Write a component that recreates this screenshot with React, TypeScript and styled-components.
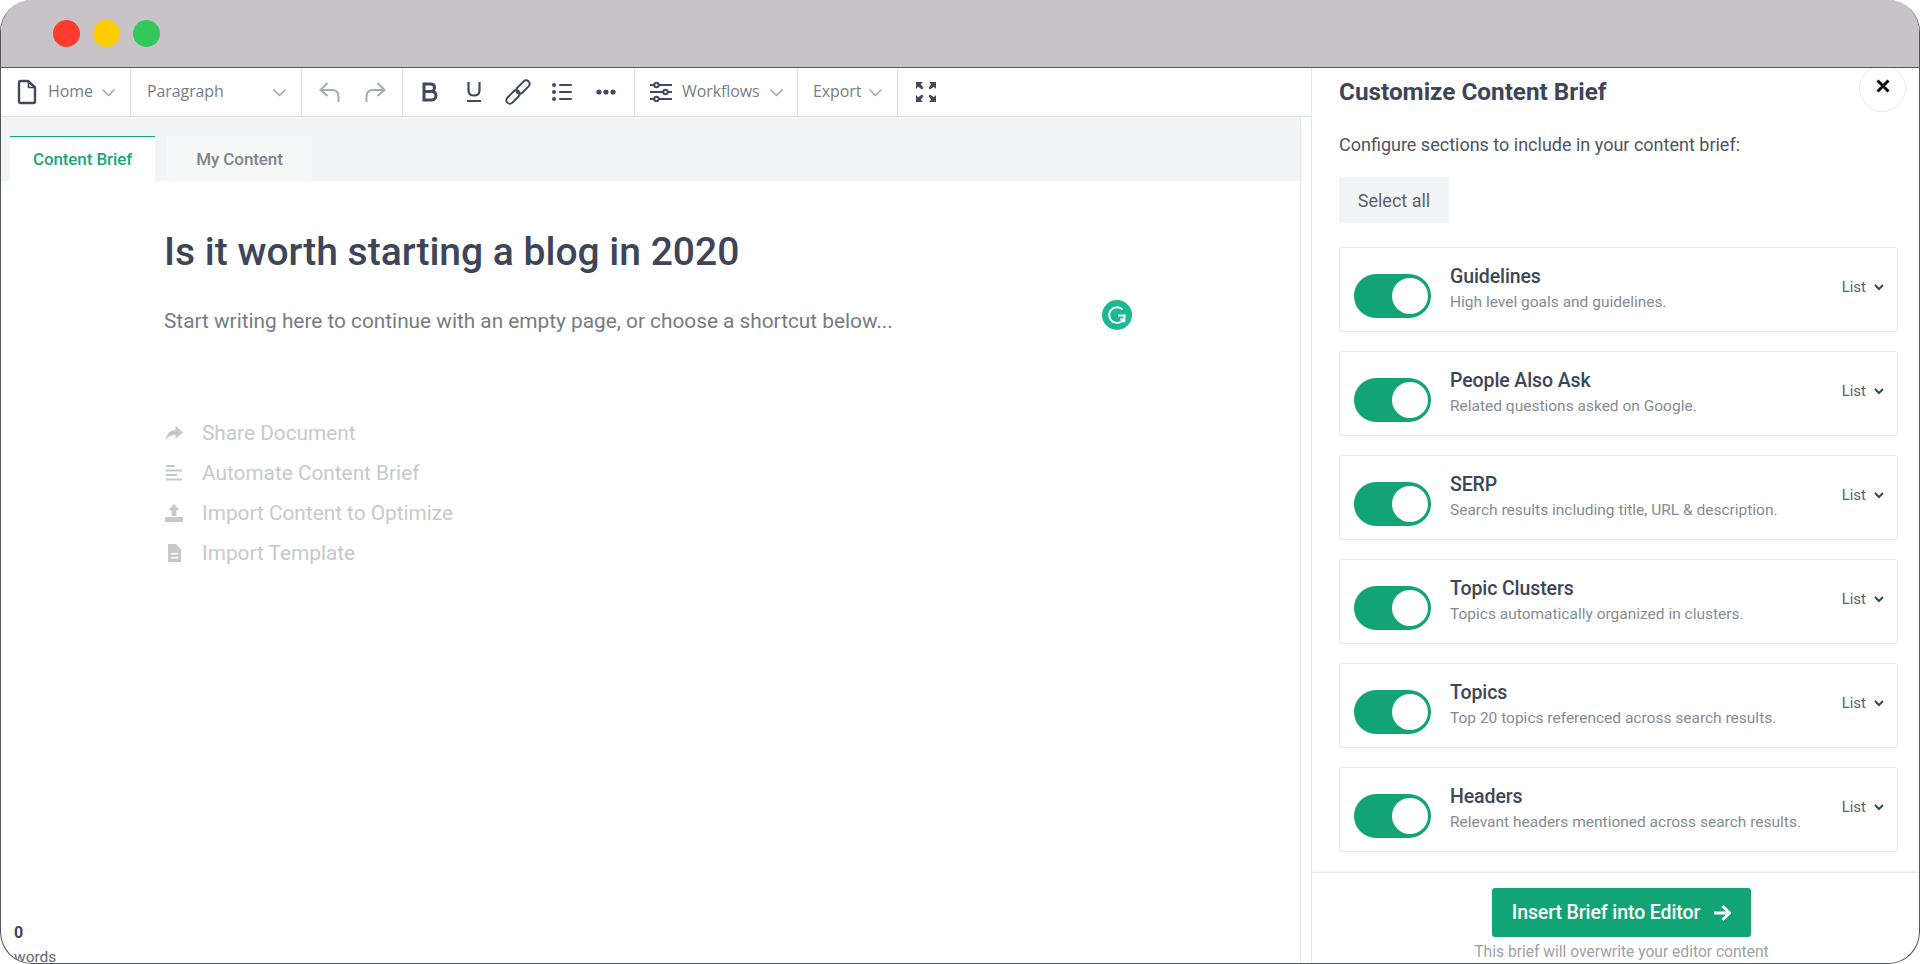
import React from "react";
import styled, { createGlobalStyle } from "styled-components";

const GlobalStyle = createGlobalStyle`
  html, body {
    margin: 0;
    padding: 0;
    background: #ffffff;
  }
  body {
    font-family: Roboto, "Liberation Sans", sans-serif;
  }
  * {
    box-sizing: border-box;
  }
`;

const Window = styled.div`
  display: flex;
  flex-direction: column;
  width: 1920px;
  height: 964px;
  overflow: hidden;
  border-radius: 32px;
  border: 1px solid #55565a;
  border-top: none;
  background: #ffffff;
`;

const TitleBar = styled.div`
  display: flex;
  flex: none;
  align-items: center;
  gap: 13px;
  height: 68px;
  padding: 0 0 0 52px;
  background: #c8c3c7;
  border-bottom: 1px solid #55565a;
`;

const Light = styled.span<{ $color: string }>`
  width: 27px;
  height: 27px;
  border-radius: 50%;
  background: ${(p) => p.$color};
`;

const Body = styled.div`
  display: flex;
  flex: 1;
  min-height: 0;
`;

const LeftColumn = styled.div`
  display: flex;
  flex-direction: column;
  width: 1311px;
  border-right: 1px solid #e5e7e9;
`;

const Toolbar = styled.div`
  display: flex;
  flex: none;
  height: 49px;
  border-bottom: 1px solid #dcdee0;
`;

const ToolGroup = styled.div<{ $width: number; $pad: number; $gap?: number; $last?: boolean }>`
  display: flex;
  flex: none;
  align-items: center;
  gap: ${(p) => p.$gap ?? 0}px;
  width: ${(p) => p.$width}px;
  padding-left: ${(p) => p.$pad}px;
  border-right: ${(p) => (p.$last ? "none" : "1px solid #dcdee0")};
  font-family: "Open Sans", sans-serif;
  font-size: 16px;
  color: #777d85;
`;

const ToolLabel = styled.span<{ $left?: number; $right?: number }>`
  margin-top: -2px;
  margin-left: ${(p) => p.$left ?? 0}px;
  margin-right: ${(p) => p.$right ?? 0}px;
  white-space: nowrap;
  letter-spacing: -0.1px;
`;

const IconSlot = styled.span`
  display: flex;
  flex: none;
  align-items: center;
  justify-content: center;
  width: 44px;
`;

const MirrorSlot = styled.span`
  display: flex;
  transform: scaleX(-1);
`;

const Editor = styled.div`
  display: flex;
  flex: 1;
  flex-direction: column;
  width: 1300px;
  min-height: 0;
  border-right: 1px solid #e5e7e9;
`;

const TabBar = styled.div`
  display: flex;
  flex: none;
  gap: 12px;
  height: 64px;
  padding: 19px 0 0 9px;
  background: #f2f5f6;
`;

const Tab = styled.div<{ $active?: boolean }>`
  display: flex;
  align-items: center;
  justify-content: center;
  width: 145px;
  background: ${(p) => (p.$active ? "#ffffff" : "#f7f8f8")};
  border-top: 1px solid ${(p) => (p.$active ? "#12a474" : "#f7f8f8")};
  font-size: 17px;
  font-weight: 500;
  letter-spacing: -0.1px;
  color: ${(p) => (p.$active ? "#1fa57a" : "#7f858c")};
`;

const EditorContent = styled.div`
  position: relative;
  display: flex;
  flex: 1;
  flex-direction: column;
  padding: 45px 0 0 163px;
`;

const Heading = styled.h1`
  margin: 0;
  font-size: 39px;
  line-height: 52px;
  font-weight: 500;
  color: #3c4658;
`;

const Placeholder = styled.p`
  margin: 28px 0 0;
  font-size: 20.8px;
  line-height: 30px;
  color: #767c84;
`;

const ShortcutList = styled.div`
  display: flex;
  flex-direction: column;
  margin-top: 77px;
`;

const Shortcut = styled.div`
  display: flex;
  align-items: center;
  gap: 18px;
  height: 40px;
  font-size: 20.8px;
  color: #c6c9cc;
  svg {
    flex: none;
    width: 20px;
    height: 20px;
  }
`;

const GrammarlyBadge = styled.div`
  position: absolute;
  top: 119px;
  left: 1101px;
  display: flex;
  align-items: center;
  justify-content: center;
  width: 30px;
  height: 30px;
  border-radius: 50%;
  background: #1bb893;
`;

const WordCount = styled.div`
  position: absolute;
  left: 13px;
  bottom: -6px;
  color: #5f6672;
  font-size: 15.5px;
  line-height: 24px;
  b {
    display: block;
    color: #3c4658;
    font-size: 16px;
    font-weight: 700;
  }
`;

const Panel = styled.div`
  position: relative;
  display: flex;
  flex: 1;
  flex-direction: column;
  min-width: 0;
  overflow: hidden;
`;

const PanelBody = styled.div`
  display: flex;
  flex: 1;
  flex-direction: column;
  padding: 8px 21px 0 27px;
  overflow: hidden;
`;

const PanelTitle = styled.h2`
  margin: 0;
  font-size: 24.3px;
  line-height: 32px;
  font-weight: 700;
  color: #3c4658;
`;

const PanelIntro = styled.p`
  margin: 25px 0 0;
  font-size: 18px;
  line-height: 24px;
  color: #4d5561;
`;

const SelectAll = styled.button`
  width: 110px;
  height: 46px;
  margin-top: 20px;
  border: none;
  border-radius: 2px;
  background: #f3f4f6;
  font-family: inherit;
  font-size: 18px;
  color: #5b626c;
`;

const CardList = styled.div`
  display: flex;
  flex-direction: column;
  gap: 19px;
  margin-top: 24px;
`;

const Card = styled.div`
  display: flex;
  flex: none;
  align-items: center;
  height: 85px;
  padding: 0 12px 0 14px;
  border: 1px solid #e6e8ea;
  border-radius: 3px;
`;

const Toggle = styled.div`
  display: flex;
  flex: none;
  align-items: center;
  justify-content: flex-end;
  width: 77px;
  height: 44px;
  margin-top: 12px;
  padding-right: 3px;
  border-radius: 22px;
  background: #12a474;
  span {
    width: 36px;
    height: 36px;
    border-radius: 50%;
    background: #ffffff;
  }
`;

const CardText = styled.div`
  display: flex;
  flex: 1;
  flex-direction: column;
  gap: 3px;
  margin: -2px 0 0 19px;
`;

const CardTitle = styled.div`
  font-size: 19.5px;
  line-height: 24px;
  font-weight: 500;
  letter-spacing: -0.1px;
  color: #3c4658;
`;

const CardDesc = styled.div`
  font-size: 15.5px;
  line-height: 20px;
  color: #868b92;
`;

const ListSelect = styled.div`
  display: flex;
  align-items: center;
  gap: 7px;
  margin-top: -5px;
  font-size: 15px;
  color: #5b626c;
`;

const CloseButton = styled.div`
  position: absolute;
  top: -3px;
  left: 547px;
  display: flex;
  align-items: center;
  justify-content: center;
  width: 47px;
  height: 47px;
  padding-bottom: 5px;
  border: 1px solid #e8e8e8;
  border-radius: 50%;
  background: #ffffff;
`;

const PanelFooter = styled.div`
  display: flex;
  flex: none;
  flex-direction: column;
  align-items: center;
  height: 91px;
  padding: 15px 0 0 12px;
  border-top: 1px solid #e8e9ea;
  box-shadow: 0 -2px 2px rgba(0, 0, 0, 0.04);
`;

const InsertButton = styled.button`
  display: flex;
  align-items: center;
  justify-content: center;
  gap: 13px;
  width: 259px;
  height: 49px;
  border: none;
  border-radius: 3px;
  background: #12a474;
  color: #ffffff;
  font-family: inherit;
  font-size: 19.5px;
  font-weight: 500;
  letter-spacing: -0.1px;
`;

const FooterNote = styled.div`
  margin-top: 5px;
  font-size: 15.6px;
  line-height: 20px;
  color: #9ea2a7;
`;

const Chevron = () => (
  <svg width="15" height="15" viewBox="0 0 15 15" fill="none">
    <path d="M1.5 4.5 7.5 10.5 13.5 4.5" stroke="#9a9ea5" strokeWidth="1.3" />
  </svg>
);

const DocIcon = () => (
  <svg width="20" height="26" viewBox="0 0 20 26" fill="none">
    <path
      d="M2 3.5C2 2.7 2.7 2 3.5 2H11L18 8.5V22.5C18 23.3 17.3 24 16.5 24H3.5C2.7 24 2 23.3 2 22.5Z"
      stroke="#3f4960"
      strokeWidth="2.4"
      strokeLinejoin="round"
    />
    <path d="M11.5 2V8.5H18" stroke="#3f4960" strokeWidth="1.6" />
  </svg>
);

const UndoIcon = () => (
  <svg width="24" height="24" viewBox="0 0 24 24" fill="none">
    <path
      d="M9.5 3 2.5 10 9.5 16M3 10H14C18.5 10 20.5 13 20.5 16.5V22"
      stroke="#a6a9ad"
      strokeWidth="2"
    />
  </svg>
);

const BoldIcon = () => (
  <svg width="16" height="20" viewBox="0 0 16 20" fill="none">
    <path
      d="M2 2H8.5C11 2 12.5 3.5 12.5 5.5S11 9.5 8.5 9.5H2ZM2 9.5H9.5C12.3 9.5 14 11.2 14 13.6S12.3 18 9.5 18H2Z"
      stroke="#3f4960"
      strokeWidth="3"
    />
  </svg>
);

const UnderlineIcon = () => (
  <svg width="16" height="22" viewBox="0 0 16 22" fill="none">
    <path
      d="M2.5 1V9.5C2.5 12.5 4.5 14.5 8 14.5S13.5 12.5 13.5 9.5V1M1 20H15"
      stroke="#3f4960"
      strokeWidth="2.2"
    />
  </svg>
);

const LinkIcon = () => (
  <svg width="26" height="26" viewBox="0 0 26 26" fill="none" stroke="#3f4960" strokeWidth="2">
    <g transform="rotate(-45 13 13)">
      <rect x="-2" y="9.500" width="16" height="7" rx="3.500" />
      <rect x="12" y="9.500" width="16" height="7" rx="3.500" />
    </g>
  </svg>
);

const BulletIcon = () => (
  <svg width="20" height="20" viewBox="0 0 20 20" fill="#3f4960">
    <circle cx="2" cy="3" r="2" />
    <circle cx="2" cy="10" r="2" />
    <circle cx="2" cy="17" r="2" />
    <rect x="7" y="2" width="13" height="2" rx="1" />
    <rect x="7" y="9" width="13" height="2" rx="1" />
    <rect x="7" y="16" width="13" height="2" rx="1" />
  </svg>
);

const DotsIcon = () => (
  <svg width="20" height="6" viewBox="0 0 20 6" fill="#3f4960">
    <circle cx="3" cy="3" r="2.6" />
    <circle cx="10" cy="3" r="2.6" />
    <circle cx="17" cy="3" r="2.6" />
  </svg>
);

const SlidersIcon = () => (
  <svg width="22" height="20" viewBox="0 0 22 20" fill="none" stroke="#3f4960" strokeWidth="2">
    <path d="M0 3H4M9 3H22M0 10H13M18 10H22M0 17H4M9 17H22" />
    <circle cx="6.5" cy="3" r="2.2" />
    <circle cx="15.5" cy="10" r="2.2" />
    <circle cx="6.5" cy="17" r="2.2" />
  </svg>
);

const ExpandIcon = () => (
  <svg width="22" height="22" viewBox="0 0 22 22" fill="#3f4960">
    <path d="M1 1H8L5.800 3.200 8.500 7 7 8.500 3.200 5.800 1 8Z" />
    <path d="M21 1H14L16.200 3.200 13.500 7 15 8.500 18.800 5.800 21 8Z" />
    <path d="M1 21H8L5.800 18.800 8.500 15 7 13.500 3.200 16.200 1 14Z" />
    <path d="M21 21H14L16.200 18.800 13.500 15 15 13.500 18.800 16.200 21 14Z" />
  </svg>
);

const ShareIcon = () => (
  <svg viewBox="0 0 20 20" fill="#c6c9cc">
    <path d="M11.5 2.5 19 9.500 11.500 16V12C7 12 4 13.500 1.500 17 2.200 11.500 5.500 7.300 11.500 7Z" />
  </svg>
);

const LinesIcon = () => (
  <svg viewBox="0 0 20 20" fill="#c6c9cc">
    <rect x="2" y="2" width="9" height="2" />
    <rect x="2" y="6.500" width="16" height="2" />
    <rect x="2" y="11" width="11" height="2" />
    <rect x="2" y="15.500" width="16" height="2" />
  </svg>
);

const UploadIcon = () => (
  <svg viewBox="0 0 20 20" fill="#c6c9cc">
    <path d="M10 1 15.500 7H12.500V13H7.500V7H4.500Z" />
    <rect x="1" y="14" width="18" height="5" rx="1" />
  </svg>
);

const TemplateIcon = () => (
  <svg viewBox="0 0 20 20" fill="#c6c9cc">
    <path d="M4 1H12L17 6V19H4ZM7 10V11.500H14V10ZM7 14V15.500H14V14Z" fillRule="evenodd" />
  </svg>
);

const GrammarlyIcon = () => (
  <svg width="20" height="20" viewBox="0 0 20 20" fill="none" stroke="#ffffff" strokeWidth="1.800">
    <path d="M15.500 4.500A7.800 7.800 0 1 0 17.800 10.500H11" />
    <path d="M13.500 13.500 17.500 16.500M17.500 12.500V16.500H13.500" strokeWidth="1.600" />
  </svg>
);

const SmallChevron = () => (
  <svg width="12" height="12" viewBox="0 0 12 12" fill="none">
    <path d="M2 4 6 8 10 4" stroke="#3c4658" strokeWidth="2" />
  </svg>
);

const sections = [
  { title: "Guidelines", desc: "High level goals and guidelines." },
  { title: "People Also Ask", desc: "Related questions asked on Google." },
  { title: "SERP", desc: "Search results including title, URL & description." },
  { title: "Topic Clusters", desc: "Topics automatically organized in clusters." },
  { title: "Topics", desc: "Top 20 topics referenced across search results." },
  { title: "Headers", desc: "Relevant headers mentioned across search results." },
];

const App = () => {
  return (
    <>
      <GlobalStyle />
      <Window>
        <TitleBar>
          <Light $color="#ff3b30" />
          <Light $color="#ffcc00" />
          <Light $color="#34c759" />
        </TitleBar>
        <Body>
          <LeftColumn>
            <Toolbar>
              <ToolGroup $width={130} $pad={16}>
                <DocIcon />
                <ToolLabel $left={11} $right={8}>Home</ToolLabel>
                <Chevron />
              </ToolGroup>
              <ToolGroup $width={171} $pad={16}>
                <ToolLabel $right={48}>Paragraph</ToolLabel>
                <Chevron />
              </ToolGroup>
              <ToolGroup $width={101} $pad={16} $gap={21}>
                <UndoIcon />
                <MirrorSlot>
                  <UndoIcon />
                </MirrorSlot>
              </ToolGroup>
              <ToolGroup $width={232} $pad={5}>
                <IconSlot>
                  <BoldIcon />
                </IconSlot>
                <IconSlot>
                  <UnderlineIcon />
                </IconSlot>
                <IconSlot>
                  <LinkIcon />
                </IconSlot>
                <IconSlot>
                  <BulletIcon />
                </IconSlot>
                <IconSlot>
                  <DotsIcon />
                </IconSlot>
              </ToolGroup>
              <ToolGroup $width={163} $pad={15}>
                <SlidersIcon />
                <ToolLabel $left={10} $right={9}>Workflows</ToolLabel>
                <Chevron />
              </ToolGroup>
              <ToolGroup $width={100} $pad={15}>
                <ToolLabel $right={7}>Export</ToolLabel>
                <Chevron />
              </ToolGroup>
              <ToolGroup $width={50} $pad={17} $last>
                <ExpandIcon />
              </ToolGroup>
            </Toolbar>
            <Editor>
              <TabBar>
                <Tab $active>Content Brief</Tab>
                <Tab>My Content</Tab>
              </TabBar>
              <EditorContent>
                <Heading>Is it worth starting a blog in 2020</Heading>
                <Placeholder>
                  Start writing here to continue with an empty page, or choose a shortcut below...
                </Placeholder>
                <ShortcutList>
                  <Shortcut>
                    <ShareIcon />
                    Share Document
                  </Shortcut>
                  <Shortcut>
                    <LinesIcon />
                    Automate Content Brief
                  </Shortcut>
                  <Shortcut>
                    <UploadIcon />
                    Import Content to Optimize
                  </Shortcut>
                  <Shortcut>
                    <TemplateIcon />
                    Import Template
                  </Shortcut>
                </ShortcutList>
                <GrammarlyBadge>
                  <GrammarlyIcon />
                </GrammarlyBadge>
                <WordCount>
                  <b>0</b>
                  words
                </WordCount>
              </EditorContent>
            </Editor>
          </LeftColumn>
          <Panel>
            <PanelBody>
              <PanelTitle>Customize Content Brief</PanelTitle>
              <PanelIntro>Configure sections to include in your content brief:</PanelIntro>
              <SelectAll>Select all</SelectAll>
              <CardList>
                {sections.map((s) => (
                  <Card key={s.title}>
                    <Toggle>
                      <span />
                    </Toggle>
                    <CardText>
                      <CardTitle>{s.title}</CardTitle>
                      <CardDesc>{s.desc}</CardDesc>
                    </CardText>
                    <ListSelect>
                      List
                      <SmallChevron />
                    </ListSelect>
                  </Card>
                ))}
              </CardList>
            </PanelBody>
            <CloseButton>
              <svg width="14" height="14" viewBox="0 0 14 14" fill="none">
                <path d="M1.500 1.500 12.500 12.500M12.500 1.500 1.500 12.500" stroke="#111111" strokeWidth="3" />
              </svg>
            </CloseButton>
            <PanelFooter>
              <InsertButton>
                Insert Brief into Editor
                <svg width="18" height="18" viewBox="0 0 18 18" fill="none">
                  <path d="M1 9H16M9.500 2 16.500 9 9.500 16" stroke="#ffffff" strokeWidth="3" />
                </svg>
              </InsertButton>
              <FooterNote>This brief will overwrite your editor content</FooterNote>
            </PanelFooter>
          </Panel>
        </Body>
      </Window>
    </>
  );
};

export default App;
